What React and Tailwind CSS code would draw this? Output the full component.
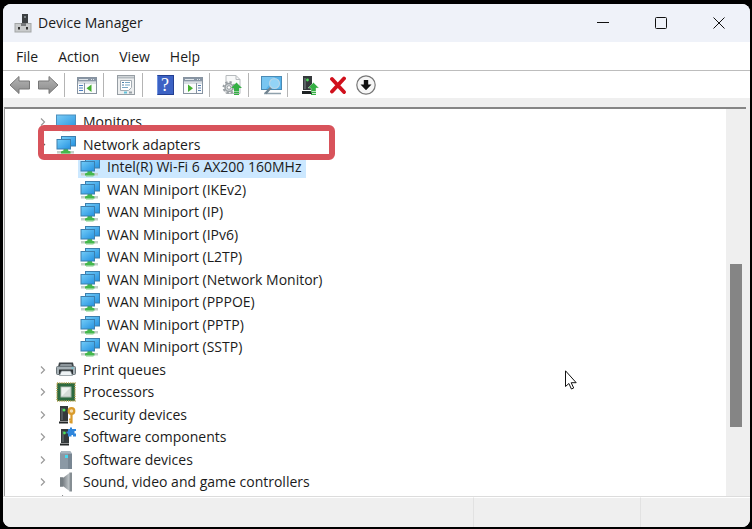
import React from "react";

const MonitorIcon = () => (
  <svg viewBox="0 0 20 20" className="h-5 w-5" aria-hidden="true">
    <defs>
      <linearGradient id="screen" x1="0" y1="0" x2="1" y2="1">
        <stop offset="0" stopColor="#7accf7" />
        <stop offset="1" stopColor="#2b96e0" />
      </linearGradient>
    </defs>
    <rect x="0.5" y="3" width="19" height="13" fill="url(#screen)" stroke="#4a8fbd" />
    <path d="M6 18.5h8" stroke="#7d8b92" strokeWidth="1.5" />
  </svg>
);

const NetworkIcon = () => (
  <svg viewBox="0 0 20 20" className="h-5 w-5" aria-hidden="true">
    <defs>
      <linearGradient id="net" x1="0" y1="0" x2="1" y2="1">
        <stop offset="0" stopColor="#74cdf8" />
        <stop offset="1" stopColor="#2491e0" />
      </linearGradient>
    </defs>
    <path d="M1 16h17v2.500H1z" fill="#c3cfc8" />
    <path d="M7.500 13h4.500v2.500l2.500 1v2H5v-2l2.500-1z" fill="#45b84c" />
    <path d="M6 19h7.500" stroke="#7fcf83" />
    <rect x="5.500" y="1.500" width="14" height="9.500" fill="url(#net)" stroke="#3c7fae" />
    <rect x="1" y="4.500" width="13.500" height="9.500" fill="url(#net)" stroke="#3c7fae" />
  </svg>
);

const PrinterIcon = () => (
  <svg viewBox="0 0 20 20" className="h-5 w-5" aria-hidden="true">
    <path d="M3 2.500h14l1 4.500H2z" fill="#3e4448" />
    <path d="M4.500 4h11l.5 2H4z" fill="#8d969b" />
    <rect x="0.500" y="6.500" width="19" height="8" rx="1" fill="#a7b1b6" stroke="#6b757a" />
    <path d="M3 9.500h14v4.500H3z" fill="#2d3235" />
    <path d="M5.500 11h9l2 4.500h-13z" fill="#eef3f5" stroke="#7b868b" strokeWidth="0.700" />
    <rect x="15.500" y="7.500" width="2" height="1" fill="#55d4e6" />
  </svg>
);

const ProcessorIcon = () => (
  <svg viewBox="0 0 20 20" className="h-5 w-5" aria-hidden="true">
    <rect x="1" y="1" width="18" height="18" fill="#2f6b40" stroke="#b5a252" strokeWidth="1.500" strokeDasharray="1.200 1" />
    <rect x="2" y="2" width="16" height="16" fill="#2c6a40" />
    <rect x="5" y="5" width="10" height="10" fill="#d5ddd8" stroke="#a9b8ae" />
    <path d="M5.500 14.500v-9h9z" fill="#eff3f0" />
  </svg>
);

const SecurityIcon = () => (
  <svg viewBox="0 0 20 20" className="h-5 w-5" aria-hidden="true">
    <path d="M4 1h8v15H4z" fill="#34393b" />
    <path d="M3 16.500h9v2H3z" fill="#232728" />
    <path d="M5 3h2v12H5z" fill="#50575a" />
    <circle cx="8" cy="5" r="1.500" fill="#4de05a" />
    <circle cx="15.500" cy="6" r="2.800" fill="#f3dcae" stroke="#d99b2c" strokeWidth="2.200" />
    <path d="M15.500 9v9.500M15.500 14.500h-2.500M15.500 17h-2" stroke="#d99b2c" strokeWidth="2.200" />
  </svg>
);

const ComponentIcon = () => (
  <svg viewBox="0 0 20 20" className="h-5 w-5" aria-hidden="true">
    <path d="M5 2h8v14H5z" fill="#34393b" />
    <path d="M4 16.500h9v2H4z" fill="#232728" />
    <path d="M6 4h2v11H6z" fill="#50575a" />
    <circle cx="8.500" cy="6" r="1.400" fill="#4de05a" />
    <path d="M12 2h2V.5h2V2h4v2h-1.500v2.500H20v3h-3V8h-1.500v1.500H12V6.500h-1.500v-2H12z" fill="#2f86dc" />
  </svg>
);

const SoftwareIcon = () => (
  <svg viewBox="0 0 20 20" className="h-5 w-5" aria-hidden="true">
    <path d="M5.500 1H14l2 2.500V19H4V3z" fill="#8b99a5" />
    <path d="M5.500 1H14l1.500 2.500H4.500z" fill="#aab6bf" />
    <path d="M12 4h4v15h-4z" fill="#788692" />
    <rect x="9" y="5" width="3" height="3" fill="#48d8ee" />
  </svg>
);

const SoundIcon = () => (
  <svg viewBox="0 0 20 20" className="h-5 w-5" aria-hidden="true">
    <defs>
      <linearGradient id="cone" x1="0" y1="0" x2="1" y2="0">
        <stop offset="0" stopColor="#596066" />
        <stop offset="1" stopColor="#c9cfd2" />
      </linearGradient>
    </defs>
    <path d="M4 5.500h3.500L14 .5v19L7.500 14.500H4z" fill="url(#cone)" />
    <path d="M4 5.500h3v9H4z" fill="#777f84" />
    <path d="M13.500.5H16v19h-2.500z" fill="#868e93" />
  </svg>
);

const StorageIcon = () => (
  <svg viewBox="0 0 20 20" className="h-5 w-5" aria-hidden="true">
    <path d="M6 0l4 3-4 3z" fill="#454b4e" />
    <rect x="3" y="7" width="15" height="9" fill="#858d91" />
  </svg>
);

const ArrowIcon = ({ flip = false }) => (
  <svg viewBox="0 0 22 20" className={`h-5 w-[22px] ${flip ? "-scale-x-100" : ""}`} aria-hidden="true">
    <defs>
      <linearGradient id="arrow" x1="0" y1="0" x2="0" y2="1">
        <stop offset="0" stopColor="#b4b4b4" />
        <stop offset="1" stopColor="#8a8a8a" />
      </linearGradient>
    </defs>
    <path d="M1 10l9-8.500V6h10.500v8H10v4.500z" fill="url(#arrow)" stroke="#777" strokeLinejoin="round" />
  </svg>
);

const PaneIcon = ({ actions = false }) => (
  <svg viewBox="0 0 20 18" className="h-[18px] w-5" aria-hidden="true">
    <rect x="0.500" y="1.500" width="19" height="16" fill="#fafbfc" stroke="#8793a0" />
    <path d="M1 2h18v3.500H1z" fill="#8996a5" />
    <path d="M14 3.500h1M16 3.500h1M2 3.500h9" stroke="#dfe5ea" />
    <path d="M1 7h18" stroke="#b6c0ca" />
    {actions ? (
      <>
        <path d="M13.500 7v10" stroke="#8793a0" />
        <path d="M5 8.500l5 3.700-5 3.700z" fill="#43b02f" />
        <path d="M15 9.500h3M15 12h3M15 14.500h3" stroke="#587fae" />
      </>
    ) : (
      <>
        <path d="M7.500 7v10" stroke="#8793a0" />
        <path d="M14.500 8.500l-5 3.700 5 3.700z" fill="#43b02f" />
        <path d="M2 9.500h4M2 12h4M2 14.500h4" stroke="#4d7fc0" />
      </>
    )}
  </svg>
);

const PropertiesIcon = () => (
  <svg viewBox="0 0 20 20" className="h-5 w-5" aria-hidden="true">
    <rect x="1.500" y="0.500" width="17" height="19" fill="#eceeef" stroke="#969da3" />
    <path d="M2 2.500h16" stroke="#b5bcc1" strokeWidth="2" />
    <path d="M4.500 5.500h11v7l-3 3h-8z" fill="#fff" stroke="#a2abb2" />
    <path d="M9 7.500h5M9 10h5M6 12.500h6" stroke="#79a7c4" />
    <path d="M6 7.500h2M6 10h2" stroke="#4a7ca5" />
    <path d="M8 17.500h3" stroke="#62c2da" strokeWidth="2" />
    <path d="M13 17.500h3" stroke="#9aa2a8" strokeWidth="2" />
  </svg>
);

const HelpIcon = () => (
  <span className="flex h-5 w-[17px] items-center justify-center border border-[#233f91] border-l-[#6f92df] bg-[#3c62c4] font-['Liberation_Serif',serif] text-lg leading-5 text-white">
    ?
  </span>
);

const UpdateIcon = () => (
  <svg viewBox="0 0 20 20" className="h-5 w-5" aria-hidden="true">
    <path d="M4 .5h10l4 4v14H4z" fill="#f8f9f9" stroke="#b6babd" />
    <path d="M14 .5v4h4" fill="none" stroke="#b6babd" />
    <circle cx="7" cy="12.500" r="5.500" fill="none" stroke="#999fa3" strokeWidth="2" strokeDasharray="2.300 2" />
    <circle cx="7" cy="12.500" r="4" fill="#d3d7d9" stroke="#999fa3" strokeWidth="1.500" />
    <circle cx="7" cy="12.500" r="1.800" fill="#fff" stroke="#999fa3" />
    <path d="M14.500 7.500l5.500 5.500h-3v3.500h-5V13H9z" fill="#35b044" />
    <path d="M12 17.500h5M12 19.400h5" stroke="#35b044" strokeWidth="1.200" />
  </svg>
);

const ScanIcon = () => (
  <svg viewBox="0 0 21 20" className="h-5 w-[21px]" aria-hidden="true">
    <rect x="0.500" y="1.500" width="20" height="13" fill="#56b2ea" stroke="#4a8bb5" />
    <path d="M1 2h13L5 14H1z" fill="#79c6f1" />
    <path d="M3 18.500h17" stroke="#8fa1ac" strokeWidth="1.500" />
    <path d="M10 12.500L4.500 18.500" stroke="#71838f" strokeWidth="2.500" />
    <circle cx="13.500" cy="8.500" r="5" fill="#93d3f6" stroke="#b5d5e8" strokeWidth="1.200" />
  </svg>
);

const EnableIcon = () => (
  <svg viewBox="0 0 18 20" className="h-5 w-[18px]" aria-hidden="true">
    <path d="M2 1h9v14H2z" fill="#34393b" />
    <path d="M1 16h10v3H1z" fill="#1f2324" />
    <path d="M3 3h2v11H3z" fill="#5a6265" />
    <circle cx="6.500" cy="5" r="1.400" fill="#4de05a" />
    <path d="M12.500 7.500L18 13h-3v3.500h-5V13H7z" fill="#35b044" stroke="#eaf5eb" strokeWidth="0.400" />
    <path d="M10 17.500h5M10 19.400h5" stroke="#35b044" strokeWidth="1.200" />
  </svg>
);

const UninstallIcon = () => (
  <svg viewBox="0 0 18 18" className="h-[18px] w-[18px]" aria-hidden="true">
    <path d="M3 3l12 13M15 2.500L3 15.500" stroke="#d0101c" strokeWidth="3.800" strokeLinecap="round" />
  </svg>
);

const DisableIcon = () => (
  <svg viewBox="0 0 20 20" className="h-5 w-5" aria-hidden="true">
    <circle cx="10" cy="10" r="9.200" fill="#f6f6f6" stroke="#777" strokeWidth="1.200" />
    <path d="M7.800 5h4.400v4.500h3.300L10 15.300 4.500 9.500h3.300z" fill="#111" />
  </svg>
);

const DeviceManagerIcon = () => (
  <svg viewBox="0 0 18 20" className="h-5 w-[18px]" aria-hidden="true">
    <path d="M8 1h6v10H8z" fill="#3c4042" />
    <path d="M10 3h2v2h-2z" fill="#7d8487" />
    <rect x="1" y="10.500" width="16" height="8.500" fill="#c9cbcc" stroke="#a3a6a7" />
    <path d="M7 10h5v3H7z" fill="#77797b" />
    <path d="M4 14h2v2.500H4zM12 14h2v2.500h-2z" fill="#333" />
  </svg>
);

const adapters = [
  "Intel(R) Wi-Fi 6 AX200 160MHz",
  "WAN Miniport (IKEv2)",
  "WAN Miniport (IP)",
  "WAN Miniport (IPv6)",
  "WAN Miniport (L2TP)",
  "WAN Miniport (Network Monitor)",
  "WAN Miniport (PPPOE)",
  "WAN Miniport (PPTP)",
  "WAN Miniport (SSTP)",
];

const rows = [
  { label: "Monitors", icon: MonitorIcon },
  { label: "Network adapters", icon: NetworkIcon, open: true, marked: true },
  ...adapters.map((label, i) => ({ label, icon: NetworkIcon, child: true, selected: i === 0 })),
  { label: "Print queues", icon: PrinterIcon },
  { label: "Processors", icon: ProcessorIcon },
  { label: "Security devices", icon: SecurityIcon },
  { label: "Software components", icon: ComponentIcon },
  { label: "Software devices", icon: SoftwareIcon },
  { label: "Sound, video and game controllers", icon: SoundIcon },
  { label: "", icon: StorageIcon },
];

const toolbar = [
  [
    { name: "Back", icon: <ArrowIcon /> },
    { name: "Forward", icon: <ArrowIcon flip /> },
  ],
  [{ name: "Show/Hide Console Tree", icon: <PaneIcon /> }],
  [{ name: "Properties", icon: <PropertiesIcon /> }],
  [
    { name: "Help", icon: <HelpIcon /> },
    { name: "Show/Hide Action Pane", icon: <PaneIcon actions /> },
  ],
  [{ name: "Update driver", icon: <UpdateIcon /> }],
  [{ name: "Scan for hardware changes", icon: <ScanIcon /> }],
  [
    { name: "Enable device", icon: <EnableIcon /> },
    { name: "Uninstall device", icon: <UninstallIcon /> },
    { name: "Disable device", icon: <DisableIcon /> },
  ],
];

const windowControls = [
  { name: "Minimize", path: "M0 5.500h12" },
  { name: "Maximize", path: "M1.500.5h9a1 1 0 0 1 1 1v9a1 1 0 0 1-1 1h-9a1 1 0 0 1-1-1v-9a1 1 0 0 1 1-1z" },
  { name: "Close", path: "M.5.5l11 11M11.500.5l-11 11" },
];

const Chevron = ({ open }) => (
  <svg viewBox="0 0 6 8" className="h-2 w-1.5" fill="none" stroke={open ? "#666" : "#9a9a9a"} strokeWidth="1.200" aria-hidden="true">
    <path d={open ? "M0 3l2.500 2.500L5 3" : "M1 .5L4.500 4 1 7.500"} />
  </svg>
);

const TreeRow = ({ label, icon: Icon, child, open, selected, marked }) => (
  <li role="treeitem" aria-expanded={open} aria-selected={selected} className="relative flex items-center odd:h-[22px] even:h-[23px]">
    <span className={child ? "w-[73px]" : "flex w-[49px] pl-[35px]"}>
      {!child && label && <Chevron open={open} />}
    </span>
    <span className={`flex h-full items-center pr-1 pl-0.5 ${selected ? "bg-[#cce8ff]" : ""}`}>
      <span className="mr-[7px]">
        <Icon />
      </span>
      {label}
    </span>
    {marked && (
      <span className="absolute -top-2 left-[33px] z-10 h-[35px] w-[297px] rounded-md border-[6px] border-[#d8535b]" />
    )}
  </li>
);

const App = () => (
  <div className="h-screen bg-black pt-1 pr-0.5 pb-0.5 pl-[3px] font-['Open_Sans','Noto_Sans',sans-serif] text-sm text-[#1b1b1b]">
    <div className="flex h-full flex-col overflow-hidden rounded-lg bg-white">
      <header className="flex h-[38px] shrink-0 items-center bg-[#eff2f9] pr-0.5 pl-[11px]">
        <DeviceManagerIcon />
        <h1 className="ml-1.5">Device Manager</h1>
        <div className="ml-auto flex h-full">
          {windowControls.map(({ name, path }) => (
            <button key={name} aria-label={name} className="flex w-[58px] items-center justify-center">
              <svg viewBox="0 0 12 12" className="h-3 w-3" fill="none" stroke="#111" aria-hidden="true">
                <path d={path} />
              </svg>
            </button>
          ))}
        </div>
      </header>

      <nav className="flex h-7 shrink-0 items-center pt-px pl-[3px]">
        {["File", "Action", "View", "Help"].map((item) => (
          <button key={item} className="px-2.5">
            {item}
          </button>
        ))}
      </nav>

      <div className="flex h-7 shrink-0 items-center border-t border-[#bdbdbd] pt-px pl-[3px]">
        {toolbar.map((group, i) => (
          <div key={i} className="flex items-center">
            {i > 0 && <span className="mr-2 ml-0.5 h-6 w-px bg-[#b4b4b4]" />}
            {group.map(({ name, icon }) => (
              <button key={name} aria-label={name} className="flex w-7 items-center justify-center">
                {icon}
              </button>
            ))}
          </div>
        ))}
      </div>

      <main className="flex min-h-0 flex-1 flex-col bg-[#efefef] pt-[9px] pr-1 pl-px">
        <div className="flex min-h-0 flex-1 border-t-2 border-l border-t-[#858585] border-l-[#9a9a9a] bg-white">
          <ul role="tree" aria-label="Devices" className="min-w-0 flex-1 overflow-hidden pt-0.5 whitespace-nowrap">
            {rows.map((row, i) => (
              <TreeRow key={i} {...row} />
            ))}
          </ul>
          <div className="flex w-5 flex-col bg-[#efefef] px-1">
            <span className="grow-[155]" />
            <span className="grow-[163] bg-[#858585]" />
            <span className="grow-[69]" />
          </div>
        </div>
      </main>

      <footer className="flex h-[31px] shrink-0 border-t border-[#dcdcdc] bg-[#efefef]">
        <span className="flex-1 border-t border-white" />
        <span className="w-[168px] border-x border-t border-x-[#e2e2e2] border-t-white" />
        <span className="w-[109px] border-t border-white" />
      </footer>
    </div>

    <svg viewBox="0 0 12 20" className="absolute top-[370px] left-[565px] h-5 w-3" aria-hidden="true">
      <path d="M.5.8v15.700l3.400-3 2.500 5.500 2.300-1-2.500-5.300h5z" fill="#fff" stroke="#111" strokeLinejoin="round" />
    </svg>
  </div>
);

export default App;
